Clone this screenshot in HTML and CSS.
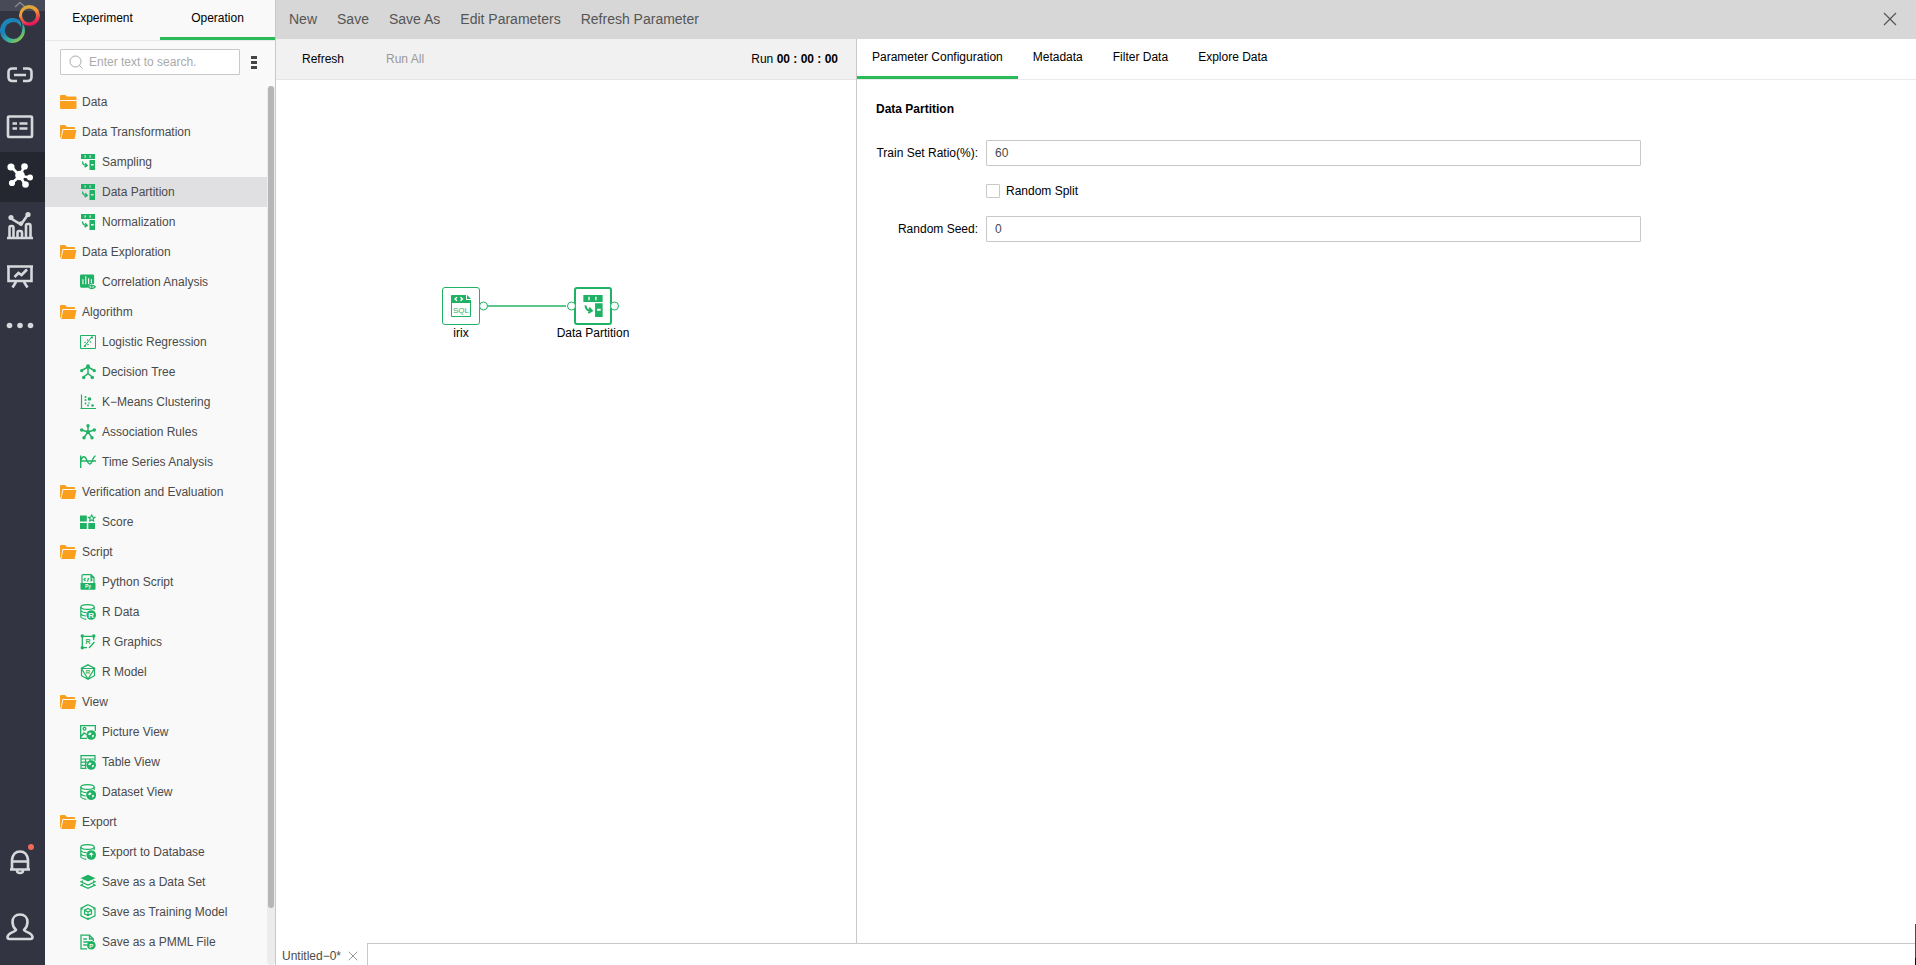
FILE: index.html
```html
<!DOCTYPE html>
<html lang="en">
<head>
<meta charset="utf-8">
<title>Experiment Operation</title>
<link rel="stylesheet" href="styles.css">
</head>
<body>
<svg class="defs" aria-hidden="true">
  <defs>
    <symbol id="i-folder" viewBox="0 0 17 14"><path fill="currentColor" d="M0 1q0-1 1-1h4.500l1.500 1.500h8.500q1 0 1 1V5H0zM0 6h16.500v7q0 1-1 1H1q-1 0-1-1z"/></symbol>
    <symbol id="i-open" viewBox="0 0 17 14"><path fill="currentColor" d="M0 1q0-1 1-1h4l2 2h7q1 0 1 1v1H2.500L.6 13Q0 13 0 12z"/><path fill="currentColor" d="M3.300 5h13.200L14.600 14H1.200z"/></symbol>
    <symbol id="i-part" viewBox="0 0 16 16"><path fill="currentColor" fill-rule="evenodd" d="M1 0h14v5H1zM4.600 1.200v2.600h1V1.200zm5 0v2.600h1V1.200zM9.500 6H15v10H9.500zm1.500 4v1.400h2.600V10z"/><path d="M2.500 7.500c.2 2.500 1.500 4 4 4M5.200 9.200l2 2.300-2.600 1.600" fill="none" stroke="currentColor" stroke-width="1.400"/></symbol>
    <symbol id="i-corr" viewBox="0 0 17 16"><path fill="currentColor" fill-rule="evenodd" d="M1.500 0h12q1.500 0 1.500 1.500V10c-4-1-6 1-7 4H1.500Q0 14 0 12.500v-11Q0 0 1.500 0zM2.500 5v5.500h1.200V5zm3-3v8.500h1.200V2zm3 2v6h1.200V4zm3 1v4h1.200V5z"/><path fill="none" stroke="currentColor" stroke-width="1.400" d="M8.700 13.200q3.800-3.600 7.600 0-3.800 3.600-7.600 0z"/><circle cx="12.500" cy="13.200" r="1" fill="currentColor"/></symbol>
    <symbol id="i-log" viewBox="0 0 16 16"><path fill="none" stroke="currentColor" d="M.5 1.500h15v13H.5zM4 13l8-10.500"/><g fill="currentColor"><circle cx="5" cy="8.500" r=".8"/><circle cx="7.500" cy="6" r=".8"/><circle cx="8" cy="10.500" r=".8"/><circle cx="10.500" cy="8" r=".8"/><circle cx="12" cy="3.500" r="1.100"/><circle cx="5" cy="12" r="1.100"/></g></symbol>
    <symbol id="i-tree" viewBox="0 0 16 16"><path fill="none" stroke="currentColor" stroke-width="1.500" d="M8 2v8M8 3L1.600 6.500M8 3l6.400 3.500M3.700 13L8 9.500l4.300 3.500"/><g fill="currentColor"><circle cx="8" cy="2.200" r="1.900"/><circle cx="1.700" cy="6.700" r="1.600"/><circle cx="14.300" cy="6.700" r="1.600"/><circle cx="3.700" cy="13.500" r="1.700"/><circle cx="12.300" cy="13.500" r="1.700"/></g></symbol>
    <symbol id="i-km" viewBox="0 0 16 16"><path fill="none" stroke="currentColor" stroke-width="1.200" d="M1.500.5v14M.5 14.500H16"/><g fill="currentColor"><circle cx="5.500" cy="3" r="1"/><circle cx="5.500" cy="6" r="1"/><circle cx="9.500" cy="5" r="1.800"/><circle cx="5.500" cy="9.500" r=".9"/><circle cx="8" cy="11.500" r="1"/><circle cx="9" cy="9" r=".8"/><circle cx="12.500" cy="11.500" r="1.300"/></g></symbol>
    <symbol id="i-assoc" viewBox="0 0 16 16"><path fill="none" stroke="currentColor" stroke-width="1.400" d="M8 8V2M8 8L1.800 6M8 8l6.200-2M8 8l-4 5.500M8 8l4 5.500"/><g fill="currentColor"><circle cx="8" cy="8" r="2"/><circle cx="8" cy="1.700" r="1.700"/><circle cx="1.700" cy="6" r="1.700"/><circle cx="14.300" cy="6" r="1.700"/><circle cx="4" cy="13.700" r="1.700"/><circle cx="12" cy="13.700" r="1.700"/></g></symbol>
    <symbol id="i-time" viewBox="0 0 16 16"><path fill="none" stroke="currentColor" stroke-width="1.400" d="M.7 1.500V14M0 7h16M.7 6.500C2.500 1.500 5 1.500 6.700 6s3.800 5.500 5.300 1.500S14.500 2 15.500 2"/></symbol>
    <symbol id="i-score" viewBox="0 0 16 16"><path fill="currentColor" d="M0 1.500h6.800v6H0zM0 9h6.800v6H0zM8.300 9H15v6H8.300z"/><path fill="none" stroke="currentColor" stroke-width="1.200" d="M11.700 1l1 2 2.100.3-1.600 1.500.4 2.200-1.900-1-1.900 1 .4-2.200-1.600-1.500 2.100-.3z"/></symbol>
    <symbol id="i-py" viewBox="0 0 16 16"><path fill="none" stroke="currentColor" stroke-width="1.200" d="M2 9V1.500Q2 .6 3 .6h8L14 3.500V9M11 .6v3h3M5.500 4L4 5.500 5.500 7M10.500 4.500L12 6l-1.500 1.300M8.500 4l-1 3.500"/><path fill="currentColor" d="M.5 9h15v6q0 .7-.7.7H1.200q-.7 0-.7-.7z"/><text class="glyph glyph-light" x="8" y="14" font-size="5">Py</text></symbol>
    <symbol id="i-db" viewBox="0 0 16 16"><g fill="none" stroke="currentColor" stroke-width="1.200"><ellipse cx="7.500" cy="3" rx="6.700" ry="2.400"/><path d="M.8 3v10q1.500 2 5.500 2.300M14.200 3v3M.8 6.500q1.500 2 5.800 2.200M.8 9.800q1.500 2 5.200 2.200"/></g><circle cx="11.200" cy="11" r="4.800" fill="currentColor"/></symbol>
    <symbol id="i-rdata" viewBox="0 0 16 16"><use href="#i-db"/><text class="glyph glyph-light" x="11.200" y="13.800" font-size="8">R</text></symbol>
    <symbol id="i-rgraph" viewBox="0 0 16 16"><path fill="none" stroke="currentColor" stroke-width="1.300" d="M2.300 2v12M2 2.300h11.500M2.300 13.700H7M9 14l5.500-6M13.700 2v4"/><g fill="currentColor"><circle cx="2.300" cy="2" r="1.700"/><circle cx="13.800" cy="2" r="1.700"/><circle cx="2.300" cy="13.800" r="1.700"/></g><text class="glyph" x="8" y="9.500" font-size="7">R</text></symbol>
    <symbol id="i-rmodel" viewBox="0 0 16 16"><path fill="none" stroke="currentColor" stroke-width="1.200" d="M8 .7l6.500 3.500v7.500L8 15.300 1.500 11.700V4.200zM1.500 4.500h13L8 15zM1.500 4.200L8 1l6.500 3.200"/><text class="glyph" x="8" y="9.500" font-size="6">R</text></symbol>
    <symbol id="i-globe" viewBox="0 0 16 16"><circle cx="11.200" cy="11" r="4.800" fill="currentColor"/><path fill="#f9f9f9" d="M8 10.500l1.500-2 2 .5-.5 1.500-1.700.8zM11.800 11.500l2-.8.200 1.600-1.500 1.400z"/></symbol>
    <symbol id="i-pic" viewBox="0 0 16 16"><path fill="none" stroke="currentColor" stroke-width="1.400" d="M7 14.400H.6V1.600h14.800V7M1 12.500L4 9l2.500 1.500"/><circle cx="4.500" cy="4.800" r="1.400" fill="none" stroke="currentColor" stroke-width="1.300"/><use href="#i-globe"/></symbol>
    <symbol id="i-table" viewBox="0 0 16 16"><path fill="none" stroke="currentColor" stroke-width="1.200" d="M6.500 14.400H1V1.600h14V7M1 5h14M1 8.200h6M1 11.400h5.500M5.500 5v9.400M10 5v2"/><use href="#i-globe"/></symbol>
    <symbol id="i-dsv" viewBox="0 0 16 16"><use href="#i-db"/><use href="#i-globe"/></symbol>
    <symbol id="i-expdb" viewBox="0 0 16 16"><use href="#i-db"/><path fill="#f9f9f9" d="M11.200 8.200l2.500 2.600h-1.400l-1.100 2.700-.4-2.500h-2z"/></symbol>
    <symbol id="i-layers" viewBox="0 0 16 16"><path fill="currentColor" d="M8 .8l7.500 3.400L8 7.600.5 4.200z"/><path fill="none" stroke="currentColor" stroke-width="1.300" d="M3 6.700L1 7.800l7 3.200 7-3.200-2-1.100M3 10l-2 1.200 7 3.200 7-3.200L13 10"/></symbol>
    <symbol id="i-cube" viewBox="0 0 16 16"><path fill="none" stroke="currentColor" stroke-width="1.200" d="M8 .7l7 3.500v7.600l-7 3.500-7-3.500V4.200zM8 4.500l3.500 1.700v3.600L8 11.500 4.500 9.800V6.200zM4.500 6.200L8 8l3.500-1.800M8 8v3.500M1 4.200l2 1M15 4.200l-2 1M8 13.500V15"/></symbol>
    <symbol id="i-pmml" viewBox="0 0 16 16"><path fill="none" stroke="currentColor" stroke-width="1.300" d="M7 14.800H1V1.200h8.500L13.300 5v2M9.500 1.200V5h3.800M3.300 5h3.500M3.300 8h6M3.300 11h3.500"/><circle cx="11.300" cy="11.300" r="4.300" fill="currentColor"/><text class="glyph glyph-light" x="11.300" y="13.500" font-size="6">P</text></symbol>
    <symbol id="i-sql" viewBox="0 0 20 22"><path fill="currentColor" d="M0 1q0-1 1-1h14v5h5v3H0zM16 0l4 4h-4z"/><path fill="none" stroke="currentColor" d="M.5 7v14.500h19V7"/><path fill="none" stroke="#fff" stroke-width="1.400" d="M6 2.200L4 4l2 1.800M9.500 2.200l2 1.800-2 1.800"/><text class="glyph glyph-thin" x="10" y="17.500" font-size="8">SQL</text></symbol>
    <symbol id="i-x" viewBox="0 0 14 14"><path fill="none" stroke="currentColor" stroke-width="1.200" d="M1 1l12 12M13 1L1 13"/></symbol>
    <linearGradient id="warm" x1="0" y1="0" x2="0.300" y2="1"><stop offset="0" stop-color="#c9b23c"/><stop offset=".45" stop-color="#f29a35"/><stop offset="1" stop-color="#e6155c"/></linearGradient>
    <linearGradient id="cool" x1="0" y1="0" x2="0.800" y2="1"><stop offset="0" stop-color="#1c8fc0"/><stop offset=".4" stop-color="#1b80b8"/><stop offset=".7" stop-color="#35b0a0"/><stop offset="1" stop-color="#a5cc3a"/></linearGradient>
  </defs>
</svg>

<div class="app">
  <nav class="rail" aria-label="Modules">
    <div class="brand">
      <svg width="45" height="52" viewBox="0 0 45 52"><path fill="#484b57" d="M0 0h45v11H0z"/><path d="M15 7l5-4.500L25 7" fill="none" stroke="#858892" stroke-width="1.500"/><path fill="url(#warm)" fill-rule="evenodd" d="M29.500 5a10.500 10.500 0 1 1-.1 21 10.500 10.500 0 0 1 .1-21zm-.5 3.500a7 7 0 1 0 .1 14 7 7 0 0 0-.1-14z"/><path fill="url(#cool)" fill-rule="evenodd" d="M12.500 18a12.500 12.500 0 1 1-.1 25 12.500 12.500 0 0 1 .1-25zm.8 4a8.500 8.500 0 1 0 .1 17 8.500 8.500 0 0 0-.1-17z"/><path d="M19 18q4.500 6 2 14" stroke="#323541" stroke-width="1.200" fill="none"/></svg>
    </div>
    <button class="rail-btn" aria-label="Connections"><svg viewBox="0 0 28 28"><path d="M11 5.500H6.500Q2.500 5.500 2.500 9v5q0 4 4 4H11M17 5.500h4.500q4 0 4 3.500v5q0 4-4 4H17M8 12h12"/></svg></button>
    <button class="rail-btn" aria-label="Data sets"><svg viewBox="0 0 28 28"><path d="M3 3.500h22q1 0 1 1v18.500q0 1-1 1H3q-1 0-1-1V4.500q0-1 1-1zM6.500 10.500H11M13.500 10.500h8M6.500 15.500H11M13.500 15.500h8"/></svg></button>
    <button class="rail-btn active" aria-label="Experiments"><svg viewBox="0 0 28 28"><path d="M14 13L5.500 4M14 13l4-9.500M14 13l10.500 1.500M14 13l-8 7M14 13l5 8.500"/><g class="solid"><circle cx="14" cy="12.500" r="4.800"/><circle cx="5" cy="4" r="3.600"/><circle cx="18.500" cy="3.500" r="3.300"/><circle cx="24" cy="14.500" r="3"/><circle cx="6" cy="20" r="3.100"/><circle cx="19.500" cy="21.500" r="3.300"/></g></svg></button>
    <button class="rail-btn" aria-label="Dashboards"><svg viewBox="0 0 28 28"><path d="M1 25h26M3.500 25V15q0-2 1.500-2h1q1.500 0 1.500 2v10M11.500 25v-5q0-2 1.500-2h1.500q1.500 0 1.500 2v5M20 25V13q0-2 1.500-2H23q1.500 0 1.500 2v12M5 5.500l10 6 7-10"/><g class="solid"><circle cx="5" cy="4.500" r="2.600"/><circle cx="15" cy="10.500" r="2.200"/><circle cx="22" cy="1.500" r="2.600"/></g></svg></button>
    <button class="rail-btn" aria-label="Reports"><svg viewBox="0 0 28 28"><path d="M2.500 3.500h23V18h-23zM1 3.500h26M10 19l-3.500 5.500M18 19l3.500 5.500M8.500 14l4-4 3 2 5.500-5.500"/></svg></button>
    <button class="rail-btn" aria-label="More"><svg viewBox="0 0 28 28"><g class="solid"><circle cx="3.500" cy="12.500" r="2.800"/><circle cx="14" cy="12.500" r="2.800"/><circle cx="24.500" cy="12.500" r="2.800"/></g></svg></button>
    <div class="rail-foot">
      <button class="rail-btn" aria-label="Notifications"><svg viewBox="0 0 28 28"><path d="M4 21.500h20M6 21.500V12q1-8.500 8-8.500t8 8.500v9.500M6 13.500h16M11 22.500q0 2.500 3 2.500t3-2.500"/><circle class="dot" cx="25" cy="-1" r="3"/></svg></button>
      <button class="rail-btn" aria-label="Account"><svg viewBox="0 0 28 28"><path d="M14 1.500c4.500 0 7.500 3 7.500 7.500 0 4-1.500 6-3.500 8 0 2 8 2 8.500 7q0 2-2 2h-21q-2 0-2-2C2 19 10 19 10 17 8 15 6.500 13 6.500 9c0-4.500 3-7.500 7.500-7.500z"/></svg></button>
    </div>
  </nav>

  <aside class="sidebar">
    <div class="side-tabs" role="tablist">
      <button role="tab" class="side-tab">Experiment</button>
      <button role="tab" class="side-tab selected" aria-selected="true">Operation</button>
    </div>
    <div class="search-row">
      <label class="search"><svg viewBox="0 0 14 14" width="14" height="14"><circle cx="6.500" cy="6.500" r="5.500"/><path d="M10.500 10.500l3 3"/></svg><input type="text" placeholder="Enter text to search." aria-label="Search"></label>
      <button class="menu" aria-label="List options"><svg width="6" height="13" viewBox="0 0 6 13"><path fill="#444" d="M0 0h6v3H0zM0 5h6v3H0zM0 10h6v3H0z"/></svg></button>
    </div>
    <div class="tree-wrap">
      <ul class="tree">
        <li class="group"><svg><use href="#i-folder"/></svg>Data</li>
        <li class="group"><svg><use href="#i-open"/></svg>Data Transformation</li>
        <li class="leaf"><svg><use href="#i-part"/></svg>Sampling</li>
        <li class="leaf current"><svg><use href="#i-part"/></svg>Data Partition</li>
        <li class="leaf"><svg><use href="#i-part"/></svg>Normalization</li>
        <li class="group"><svg><use href="#i-open"/></svg>Data Exploration</li>
        <li class="leaf"><svg><use href="#i-corr"/></svg>Correlation Analysis</li>
        <li class="group"><svg><use href="#i-open"/></svg>Algorithm</li>
        <li class="leaf"><svg><use href="#i-log"/></svg>Logistic Regression</li>
        <li class="leaf"><svg><use href="#i-tree"/></svg>Decision Tree</li>
        <li class="leaf"><svg><use href="#i-km"/></svg>K−Means Clustering</li>
        <li class="leaf"><svg><use href="#i-assoc"/></svg>Association Rules</li>
        <li class="leaf"><svg><use href="#i-time"/></svg>Time Series Analysis</li>
        <li class="group"><svg><use href="#i-open"/></svg>Verification and Evaluation</li>
        <li class="leaf"><svg><use href="#i-score"/></svg>Score</li>
        <li class="group"><svg><use href="#i-open"/></svg>Script</li>
        <li class="leaf"><svg><use href="#i-py"/></svg>Python Script</li>
        <li class="leaf"><svg><use href="#i-rdata"/></svg>R Data</li>
        <li class="leaf"><svg><use href="#i-rgraph"/></svg>R Graphics</li>
        <li class="leaf"><svg><use href="#i-rmodel"/></svg>R Model</li>
        <li class="group"><svg><use href="#i-open"/></svg>View</li>
        <li class="leaf"><svg><use href="#i-pic"/></svg>Picture View</li>
        <li class="leaf"><svg><use href="#i-table"/></svg>Table View</li>
        <li class="leaf"><svg><use href="#i-dsv"/></svg>Dataset View</li>
        <li class="group"><svg><use href="#i-open"/></svg>Export</li>
        <li class="leaf"><svg><use href="#i-expdb"/></svg>Export to Database</li>
        <li class="leaf"><svg><use href="#i-layers"/></svg>Save as a Data Set</li>
        <li class="leaf"><svg><use href="#i-cube"/></svg>Save as Training Model</li>
        <li class="leaf"><svg><use href="#i-pmml"/></svg>Save as a PMML File</li>
      </ul>
      <div class="track"><div class="thumb"></div></div>
    </div>
  </aside>

  <main class="main">
    <header class="toolbar">
      <button>New</button><button>Save</button><button>Save As</button><button>Edit Parameters</button><button>Refresh Parameter</button>
      <button class="close" aria-label="Close"><svg width="14" height="14"><use href="#i-x"/></svg></button>
    </header>
    <div class="work">
      <section class="flow">
        <div class="runbar">
          <button>Refresh</button><button disabled>Run All</button>
          <p class="timer">Run <b>00 : 00 : 00</b></p>
        </div>
        <div class="canvas">
          <svg class="wires" aria-hidden="true"><path d="M211 226h79"/></svg>
          <div class="node node-irix"><div class="box"><svg width="20" height="22"><use href="#i-sql"/></svg><i class="port out"></i></div><span>irix</span></div>
          <div class="node node-part"><div class="box picked"><svg width="22" height="22"><use href="#i-part"/></svg><i class="port in"></i><i class="port out"></i></div><span>Data Partition</span></div>
        </div>
      </section>
      <section class="config">
        <div class="tabs" role="tablist">
          <button role="tab" class="tab selected" aria-selected="true">Parameter Configuration</button><button role="tab" class="tab">Metadata</button><button role="tab" class="tab">Filter Data</button><button role="tab" class="tab">Explore Data</button>
        </div>
        <form class="form">
          <h2>Data Partition</h2>
          <div class="fields">
            <label for="ratio">Train Set Ratio(%):</label><input id="ratio" type="text" value="60">
            <label class="check"><input type="checkbox">Random Split</label>
            <label for="seed">Random Seed:</label><input id="seed" type="text" value="0">
          </div>
        </form>
      </section>
    </div>
    <footer class="files">
      <div class="file">Untitled−0* <button aria-label="Close file"><svg width="10" height="10"><use href="#i-x"/></svg></button></div>
      <div class="files-rest"></div>
    </footer>
  </main>
  <div class="edge"></div>
</div>
</body>
</html>
```

FILE: styles.css
```css
* { box-sizing: border-box; }

body {
  margin: 0;
  font: 12px/16px "Liberation Sans", Arial, sans-serif;
  color: #000;
  background: #fff;
}

button, input {
  font: inherit;
  color: inherit;
}

button {
  padding: 0;
  border: 0;
  background: none;
}

svg { display: block; flex: none; }

.defs { position: absolute; width: 0; height: 0; }

.glyph {
  font-family: "Liberation Sans", Arial, sans-serif;
  font-weight: bold;
  text-anchor: middle;
  fill: currentColor;
}
.glyph-light { fill: #f9f9f9; }
.glyph-thin { font-weight: normal; }

.app {
  position: relative;
  display: flex;
  height: 100vh;
  overflow: hidden;
}

/* module rail */
.rail {
  flex: none;
  display: flex;
  flex-direction: column;
  width: 45px;
  background: #323541;
}
.brand { height: 52px; }
.rail-btn {
  display: flex;
  align-items: center;
  width: 100%;
  height: 50px;
  padding-left: 6px;
  color: #d6d8dc;
}
.rail-btn.active { background: #242730; color: #fff; }
.rail-btn svg {
  width: 28px;
  height: 28px;
  overflow: visible;
  fill: none;
  stroke: currentColor;
  stroke-width: 2.600;
}
.rail-btn .solid { fill: currentColor; stroke: none; }
.rail-btn .dot { fill: #f0685a; stroke: none; }
.rail-foot {
  display: grid;
  gap: 15px;
  margin-top: auto;
  padding-bottom: 13px;
}

/* operation list */
.sidebar {
  flex: none;
  display: flex;
  flex-direction: column;
  width: 231px;
  border-right: 1px solid #c8c8c8;
  background: #f9f9f9;
}
.side-tabs {
  display: flex;
  height: 41px;
  border-bottom: 1px solid #e8e8e8;
}
.side-tab { flex: 1; height: 40px; padding: 3px 0 4px; border-bottom: 3px solid transparent; }
.side-tab.selected { border-color: #2bba5a; }
.search-row {
  display: flex;
  align-items: center;
  gap: 11px;
  padding: 8px 15px 11px;
}
.search {
  display: flex;
  align-items: center;
  gap: 6px;
  width: 180px;
  height: 26px;
  padding: 0 8px;
  border: 1px solid #c8c8c8;
  border-radius: 1px;
  background: #fff;
}
.search svg { fill: none; stroke: #a8a8a8; }
.search input {
  flex: 1;
  min-width: 0;
  padding: 0;
  border: 0;
  outline: 0;
  background: none;
}
.search input::placeholder { color: #aaa; }
.tree-wrap {
  flex: 1;
  display: flex;
  min-height: 0;
}
.tree {
  flex: 1;
  margin: 0;
  padding: 1px 0 0;
  list-style: none;
  overflow: hidden;
  color: #4a4a4a;
}
.tree li {
  display: flex;
  align-items: center;
  height: 30px;
}
.group { gap: 5px; padding-left: 15px; }
.group svg { width: 17px; height: 14px; color: #faa01e; }
.leaf { gap: 6px; padding-left: 35px; }
.leaf svg { width: 16px; height: 16px; color: #1fb264; }
.leaf.current { background: #e0e0e2; }
.track {
  width: 8px;
  padding: 0 1px;
  border-radius: 4px;
  background: #ececec;
}
.thumb {
  height: 93.5%;
  border-radius: 3px;
  background: #b6b6b6;
}

/* main area */
.main {
  flex: 1;
  display: flex;
  flex-direction: column;
  min-width: 0;
}
.toolbar {
  display: flex;
  align-items: center;
  gap: 20px;
  height: 39px;
  padding: 0 19px 1px 13px;
  font-size: 14px;
  color: #555;
  background: #d7d7d7;
}
.toolbar .close { margin-left: auto; }
.work {
  flex: 1;
  display: flex;
  min-height: 0;
}
.flow {
  flex: 580 1 0;
  display: flex;
  flex-direction: column;
  border-right: 1px solid #c8c8c8;
}
.runbar {
  display: flex;
  align-items: center;
  gap: 42px;
  height: 41px;
  padding: 0 18px 0 26px;
  border-bottom: 1px solid #e5e5e5;
  background: #f1f1f1;
}
.runbar button:disabled { color: #999; }
.timer { margin: 0 0 0 auto; }
.canvas { position: relative; flex: 1; }
.wires {
  position: absolute;
  width: 100%;
  height: 100%;
  fill: none;
  stroke: #5cc78d;
  stroke-width: 2;
}
.node {
  position: absolute;
  top: 207px;
  display: grid;
  justify-items: center;
  width: 90px;
}
.node-irix { left: 140px; }
.node-part { left: 272px; }
.box {
  position: relative;
  display: grid;
  place-items: center;
  width: 38px;
  height: 38px;
  border: 1px solid #1fb264;
  border-radius: 3px;
  background: #fff;
  color: #1fb264;
}
.box.picked { border-width: 2px; }
.port {
  position: absolute;
  top: 50%;
  width: 9px;
  height: 9px;
  border: 1px solid #1fb264;
  border-radius: 50%;
  background: #fff;
  translate: 0 -50%;
}
.port.in { right: 100%; }
.port.out { left: 100%; }

/* configuration panel */
.config { flex: 1059 1 0; }
.tabs {
  display: flex;
  height: 41px;
  border-bottom: 1px solid #ebebeb;
}
.tab { height: 40px; padding: 0 15px 1px; border-bottom: 3px solid transparent; }
.tab.selected { border-color: #2bba5a; }
.form { padding: 21px 19px; }
.form h2 {
  margin: 0 0 23px;
  font-size: 12px;
  line-height: 16px;
}
.fields {
  display: grid;
  grid-template-columns: 102px minmax(0, 655px);
  align-items: center;
  gap: 17px 8px;
}
.fields > label { text-align: right; }
.fields input[type="text"] {
  height: 26px;
  padding: 0 8px;
  border: 1px solid #c8c8c8;
  border-radius: 1px;
  color: #4a4a4a;
}
.fields .check {
  grid-column: 2;
  display: flex;
  align-items: center;
  gap: 6px;
}
.check input {
  appearance: none;
  width: 14px;
  height: 14px;
  margin: 0;
  border: 1px solid #c8c8c8;
  border-radius: 1px;
}

/* open files */
.files { display: flex; height: 22px; }
.file {
  display: flex;
  align-items: center;
  gap: 7px;
  width: 91px;
  padding: 4px 0 0 6px;
  color: #4a4a4a;
}
.file button { color: #888; }
.files-rest {
  flex: 1;
  border: solid #c8c8c8;
  border-width: 1px 0 0 1px;
}
.edge {
  position: absolute;
  right: 0;
  bottom: 0;
  width: 1px;
  height: 41px;
  border-bottom: 7px solid #000;
  background: #24508c;
}
```
